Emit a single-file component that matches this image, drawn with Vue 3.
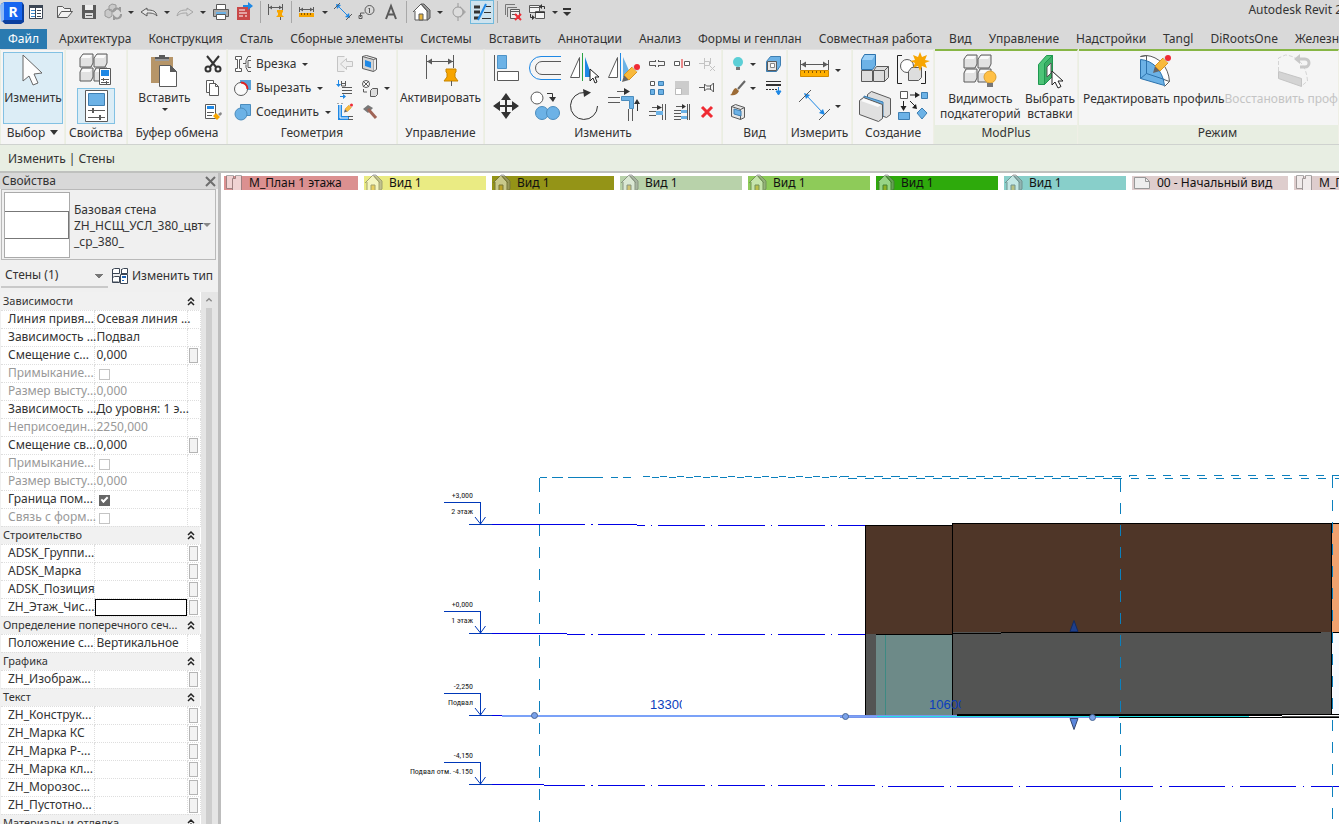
<script setup>
import { h } from 'vue'

const K = '#5a5a5a'
const B = '#6cb2e6'
const D = '#1e88e5'
const G = '#d4d4d4'
const house = `<path d="M4 11l7-7 7 7v9H5v-9" fill="#fff" stroke="${K}"/><path d="M11 4h3l6 6v8l-3 2v-9z" fill="#9a9a9a" stroke="${K}"/><path d="M3 12l8-8 7 8" fill="none" stroke="${K}"/><path d="M9 20v-6h4v6z" fill="#e9b53c" stroke="${K}"/>`
const boxes = `<path d="M2 6l3-4h10v9l-2 4H2zM16 6l3-4h10v9l-2 4H16zM2 20l2-4h11v9l-2 4H2zM16 20l2-4h11v9l-2 4H16z" fill="#e2e2e2" stroke="${K}" stroke-linejoin="round"/><path d="M5 3h9l-2 3H3zM19 3h9l-2 3H17zM5 17h9l-2 3H3zM19 17h9l-2 3H17z" fill="#fafafa"/>`
const cursor = `<path d="M0 0v14l3-3 3 6 3-1.500-3-5.500h5z" fill="#fff" stroke="#222" stroke-linejoin="round"/>`
const pencil = `<path d="M0 17l2-7 5 5z" fill="#666"/><path d="M2 10l8-8 5 5-8 8z" fill="#f8b93c" stroke="#d99420"/><path d="M10 2l2-2 5 5-2 2z" fill="#ddd"/><circle cx="15" cy="2" r="3" fill="#f02a35"/>`

const icons = {
  revit: `<path d="M1 4l3-2h18l2 3v17l-3 2H5l-3-3z" fill="#0b3f9e"/><path d="M4 2h18v18H4z" fill="#1766f0"/><path d="M0 5l4-3v18l-3 2z" fill="#8bb9f7"/>`,
  props: `<path d="M5.500 5.500h13v13h-13z" fill="#fff" stroke="#3c4654"/><path d="M5 5h14v3H5z" fill="#3c4654"/><path d="M7 10.500h4M7 13.500h4M7 16.500h4" stroke="#3b86c9"/><path d="M11.500 8v11M13 10.500h4M13 13.500h4M13 16.500h4" stroke="#3c4654"/>`,
  open: `<path d="M4.500 17.500v-11h5l2 2h6v3M4.500 17.500l4-6h11l-5 6z" fill="#f2f2f2" stroke="${K}" stroke-linejoin="round"/>`,
  save: `<path d="M5 5h14v14H6l-1-1z" fill="${K}"/><path d="M8 5h8v5H8z" fill="#eee"/><path d="M8 13h8v5H8z" fill="#ddd"/><path d="M9 15.500h6" stroke="${K}"/>`,
  sync: `<path d="M4 11l3-2 4 1v6l-3 2-4-2zM8 6l3-2 4 1v5l-3 2-4-2z" fill="#c9c9c9" stroke="#999"/><path d="M12 12a4 4 0 0 1 7-2v-3M20 14a4 4 0 0 1-7 3v3" fill="none" stroke="#9a9a9a" stroke-width="2"/>`,
  undo: `<path d="M4 12l6-4v2c6 0 9 1 10 6-3-3-6-3-10-3v3z" fill="#e5e5e5" stroke="${K}" stroke-linejoin="round"/>`,
  redo: `<path d="M20 12l-6-4v2c-6 0-9 1-10 6 3-3 6-3 10-3v3z" fill="#dadada" stroke="#a5a5a5" stroke-linejoin="round"/>`,
  print: `<path d="M7.500 4.500h9v5h-9z" fill="#fff" stroke="${K}"/><path d="M4.500 9.500h15v7h-15z" fill="#aaa" stroke="${K}"/><path d="M7 12h10v3H7z" fill="${B}"/><path d="M7.500 14.500h9v5h-9z" fill="#fff" stroke="${K}"/>`,
  pdf: `<path d="M4 7h13v13H4z" fill="#c94848"/><path d="M6 10h6M6 13h8M6 16h4M12 16h2" stroke="#fff"/><path d="M10 6h6" stroke="${D}" stroke-width="2"/><path d="M15 2l5 4-5 4z" fill="${D}"/>`,
  dimpin: `<path d="M4.500 4v11M18.500 4v8M5 7.500h13" stroke="${K}"/><path d="M5 7.500l3-2v4zM18 7.500l-3-2v4z" fill="${K}"/><path d="M13 10h6v2l-1 1v2l2 2h-8l2-2v-2l-1-1z" fill="#f7a500"/><path d="M16.500 17v3" stroke="${K}"/>`,
  measure: `<path d="M4.500 7v5M18.500 7v5M5 9.500h13" stroke="${K}"/><path d="M5 9.500l3-2v4zM18 9.500l-3-2v4z" fill="${K}"/><path d="M4 13h15v4H4z" fill="#f7a500"/><path d="M6.500 13v2M9.500 13v2M12.500 13v2M15.500 13v2" stroke="#865500"/>`,
  aligned: `<path d="M7 6l10 10" stroke="${D}"/><path d="M5 4l5 1-4 4zM19 18l-5-1 4-4z" fill="${D}"/><path d="M3 9l6-6M15 20l6-6" stroke="${K}"/>`,
  tag: `<circle cx="14.500" cy="10" r="4.500" fill="none" stroke="${K}"/><path d="M13.500 9l1-1v5M5.500 17v-4h4M4 15.500h3v3H4z" fill="none" stroke="${K}"/>`,
  letter: `<path d="M7 19l5-13 5 13M9 14.500h6" fill="none" stroke="${K}" stroke-width="2"/>`,
  home: house,
  section: `<path d="M14 6l6 6-6 6z" fill="#aaa"/><circle cx="12" cy="12" r="5" fill="#ddd" stroke="#999"/><path d="M12 3v4M12 17v4" stroke="#999"/>`,
  thin: `<path d="M4 7h6M4 12h6M4 18h5" stroke="#333" stroke-width="3"/><path d="M16 6.500h5M14 12.500h7M12 18.500h9" stroke="#333"/><path d="M8 20l8-16" stroke="${D}" stroke-width="2"/>`,
  closewin: `<path d="M4.500 15V4.500H14M6.500 17V7.500H16" fill="none" stroke="#777"/><path d="M9.500 9.500h9v9h-9zM9.500 11.500h9M11 14.500h5" fill="#eee" stroke="${K}"/><path d="M14 14l6 6M20 14l-6 6" stroke="#ed2f38" stroke-width="2"/>`,
  switch: `<path d="M4.500 5.500h10v7h-10zM4.500 7.500h10M10.500 11.500h9v7h-9z" fill="#f4f4f4" stroke="${K}"/><path d="M10 12.500h10M16 6.500h3.500V9M5.500 14v3.500H9" fill="none" stroke="#333"/><path d="M17 4v5l-3-2.500zM7 15v5l3-2.500z" fill="#333"/>`,
  custom: `<path d="M2 8h8v2H2zM2 12h8l-4 4z" fill="#333"/>`,
  arrow: `<path d="M8 3v26l6-5 4 9 5-2-4-9 8-1z" fill="#fdfdfd" stroke="#666" stroke-linejoin="round"/>`,
  typeprops: boxes + `<path d="M21.500 16.500h11v16h-11z" fill="#fff" stroke="${K}"/><path d="M23 18h8v6h-8z" fill="${D}"/><path d="M23 27.500h8M23 30.500h8M25.500 26v3M28.500 29v3" stroke="${K}"/>`,
  properties: `<path d="M7.500 2.500h22v31h-22z" fill="#fff" stroke="${K}"/><path d="M10.500 5.500h16v12h-16z" fill="${B}" stroke="#3e7fb2"/><path d="M10 22.500h17M10 29.500h17" stroke="${K}"/><path d="M14 20h2v5h-2zM21 27h2v5h-2z" fill="${K}"/>`,
  paste: `<path d="M4 5h22v26H4z" fill="#b69568"/><path d="M8 9V5h4V3h6v2h4v4z" fill="${K}"/><path d="M8 8h14" stroke="#ddd"/><path d="M12.500 13.500h11l6 6v15h-17z" fill="#fff" stroke="${K}"/><path d="M23 13v7h7z" fill="${K}"/>`,
  cut: `<path d="M6 4l9 11M18 4L9 15" stroke="#333" stroke-width="2"/><circle cx="7" cy="17" r="2.500" fill="none" stroke="#333" stroke-width="2"/><circle cx="17" cy="17" r="2.500" fill="none" stroke="#333" stroke-width="2"/>`,
  copy: `<path d="M5.500 4.500h7v12h-7z" fill="#fff" stroke="${K}"/><path d="M8.500 7.500h6l3 3v9h-9z" fill="#fff" stroke="${K}"/><path d="M14.500 7.500v3h3" fill="none" stroke="${K}"/>`,
  match: `<path d="M4.500 4.500h10v14h-10z" fill="#fff" stroke="${K}"/><path d="M6 6h7v3H6z" fill="${D}"/><path d="M6 12.500h7M6 15.500h5" stroke="${K}"/><path d="M12 16l3-3 4 4-3 3z" fill="#f7a500"/><path d="M17 14l3-2 1 2-2 2z" fill="#888"/>`,
  cope: `<path d="M4.500 4.500h6v3h-2v9h2v3h-6v-3h2v-9h-2z" fill="#fff" stroke="${K}"/><path d="M20 4.500h-3l-2 4v3h-3M20 19.500h-3l-2-4v-3M20 8.500h-3v7h3" fill="none" stroke="${K}"/>`,
  cutgeo: `<path d="M9 4h11v10h-5l-6-6z" fill="#5aa2d8"/><circle cx="10" cy="13" r="6.500" fill="#fafafa" stroke="${K}"/><path d="M10 6.500a6.500 6.500 0 0 1 6.500 6.500" fill="none" stroke="#d22" stroke-width="2"/>`,
  join: `<path d="M9.500 4.500h10v11h-10z" fill="${B}" stroke="#4b8cbd"/><circle cx="10" cy="14" r="6" fill="${B}" stroke="#4b8cbd"/>`,
  joinoff: `<path d="M11.500 4.500h-7v15h7M19.500 9.500h-6v-3l-6 5.500 6 5.500v-3h6z" fill="#eee" stroke="#c4c4c4"/>`,
  wallopen: `<path d="M4.500 4.500l11 3v12l-11-3z" fill="#d5d5d5" stroke="${K}"/><path d="M15.500 7.500l3-1v11l-3 2M4.500 4.500l4-1 10 3" fill="#eee" stroke="${K}"/><path d="M7 8l6 2v6l-6-2z" fill="${D}"/>`,
  split: `<path d="M8.500 5v5h4V5M8 7.500h5M9 14.500h10M9 17.500h10M9 11.500h10" fill="none" stroke="${K}"/><path d="M5.500 4v5M7 20.500h4" stroke="${D}"/><path d="M3 8h5l-2.500 3zM10 18l3 2.500-3 2.500z" fill="${D}"/>`,
  walljoin: `<path d="M5 5h4v11h7v4H5z" fill="${D}"/><path d="M7 4v14h8" fill="none" stroke="#fff"/><path d="M15 16.500h5M15 19.500h5M5 4v-1M9 4v-1" stroke="${K}"/><g transform="translate(11 4) scale(.5)">${pencil}</g>`,
  paint: `<circle cx="8" cy="8" r="3.500" fill="#fff" stroke="${K}"/><path d="M5 5l6 6M11 5l-6 6M5.500 13v3H9" fill="none" stroke="${K}"/><path d="M12.500 14.500l2-2h5v6l-2 2h-5z" fill="#ddd" stroke="${K}"/>`,
  hammer: `<path d="M5 9l5-4 5 3-5 5z" fill="#777"/><path d="M10 9l8 9" stroke="#a06456" stroke-width="3"/>`,
  activate: `<path d="M3.500 3v24M30.500 3v13M4 9.500h26" stroke="${K}"/><path d="M4 9.500l5-3v6zM30 9.500l-5-3v6z" fill="${K}"/><path d="M23 17h10v3l-1 1v4l3 4H21l3-4v-4l-1-1z" fill="#f7a500" stroke="#c78500"/><path d="M28.500 29v5" stroke="${K}"/>`,
  align: `<path d="M6.500 3v26" stroke="${K}"/><path d="M9.500 3.500h9v13h-9z" fill="${B}" stroke="#4d93c8"/><path d="M9.500 19.500h21v9h-21z" fill="#fff" stroke="${K}"/>`,
  offset: `<path d="M34 4.500H14a11 11 0 0 0 0 23h20" fill="none" stroke="${D}"/><path d="M34 9.500H15a6 6 0 0 0 0 13h19" fill="none" stroke="${K}"/>`,
  mirrorpick: `<path d="M4.500 25.500h9v-20z" fill="#fff" stroke="${K}"/><path d="M19 25V5l5 14v6z" fill="${D}"/><path d="M16.500 1v28" stroke="#27a344"/><g transform="translate(24 17)"><path d="M0 0v12l3-3 2 5 2-1-2-5h4z" fill="#fff" stroke="#222"/></g>`,
  mirrordraw: `<path d="M3.500 25.500h9v-20z" fill="#fff" stroke="${K}"/><path d="M18 25V5l8 18v2z" fill="${B}"/><path d="M15.500 1v28" stroke="${D}"/><g transform="translate(17 13)">${pencil}</g>`,
  move: `<path d="M18 9v18M9 18h18" stroke="#333" stroke-width="2"/><path d="M18 5l5 7H13zM18 31l5-7H13zM5 18l7-5v10zM31 18l-7-5v10z" fill="#333"/>`,
  copyel: `<circle cx="10" cy="10" r="6" fill="#fff" stroke="${K}"/><circle cx="15" cy="25" r="6.500" fill="${B}" stroke="#4b8cbd"/><circle cx="26" cy="25" r="6.500" fill="${B}" stroke="#4b8cbd"/><path d="M20 5.500h5.500V11" fill="none" stroke="#333"/><path d="M22 9h7l-3 5z" fill="#333"/>`,
  rotate: `<path d="M19 4.500A13.500 13.500 0 1 0 31.500 18" fill="none" stroke="#333"/><path d="M17 1l8 3.500-7 4.500z" fill="#333"/>`,
  trim: `<path d="M3 9.500h12M3 14.500h12M23.500 21v12M27.500 21v12M12 3.500h9" stroke="${K}"/><path d="M16.500 8.500h12v12h-4v-8h-8z" fill="${B}" stroke="#4b8cbd"/><path d="M19 0l6 3.500-6 3.500zM29 16l3-5 3 5z" fill="#333"/><path d="M32.500 15v8" stroke="#333"/>`,
  splitel: `<path d="M10.500 9.500h-6v4h6M13.500 9.500h6v4h-6M10.500 8v2M13.500 8v2M10.500 13v2M13.500 13v2" fill="none" stroke="${K}"/>`,
  splitred: `<path d="M9.500 9.500h-5v4h5zM14.500 9.500h5v4h-5z" fill="#fff" stroke="${K}"/><path d="M12 7v9" stroke="#e02020"/>`,
  unpin: `<path d="M4 11.500h5M9.500 6v11M9.500 9.500h5v4h-5M15.500 6v6M15 14l5 5M20 14l-5 5" fill="none" stroke="#c4c4c4"/>`,
  array: `<path d="M5.500 5.500h4v4h-4z" fill="#fff" stroke="${K}"/><path d="M13.500 5.500h5v4h-5zM5.500 13.500h4v5h-4zM13.500 13.500h5v5h-5z" fill="${B}" stroke="#3e7fb2"/>`,
  scale: `<path d="M5 5h14v14H5z" fill="#ccc"/><path d="M5.500 12.500h6v6h-6z" fill="#fff" stroke="#bbb"/>`,
  pin: `<path d="M4 11.500h5M9.500 8v7l2-2h4l3 3v-9l-3 3h-4zM15.500 9v5" fill="none" stroke="${K}"/>`,
  extend: `<path d="M4 11.500h7M4 15.500h7M17.500 4v16M20.500 4v16M7 7.500h7" stroke="${K}"/><path d="M12 5l5 2.500-5 2.500z" fill="#333"/><path d="M11 11h7v4h-7z" fill="${B}"/>`,
  extendm: `<path d="M4 10.500h7M4 13.500h7M4 16.500h7M4 19.500h7M17.500 4v16M19.500 4v16M6 6.500h7" stroke="${K}"/><path d="M12 4l4 2.500-4 2.500z" fill="#333"/><path d="M11 10h6v3h-6zM11 16h6v3h-6z" fill="${B}"/>`,
  del: `<path d="M7 7l10 10M17 7L7 17" stroke="#ef2b33" stroke-width="3"/>`,
  bulb: `<circle cx="12" cy="10" r="5" fill="#5ccfd6"/><path d="M10 15h4v3h-4z" fill="#777"/>`,
  cube: `<path d="M5.500 9.500l4-5h10v9l-4 6h-10z" fill="${B}" stroke="#3e7fb2"/><path d="M6.500 9.500h9v9h-9z" fill="#e8e8e8" stroke="${K}"/><path d="M9.500 11.500h4v4h-4z" fill="#fff" stroke="#888"/>`,
  brush: `<path d="M12 13l7-8" stroke="#666" stroke-width="2"/><path d="M4 19c3-1 2-6 6-7l3 3c-2 4-5 5-9 4z" fill="#9c6b35"/>`,
  linew: `<path d="M5 5.500h15" stroke="#333"/><path d="M5 9h15" stroke="#333" stroke-width="2"/><path d="M5 13.500h11" stroke="#333" stroke-dasharray="2 1"/><path d="M17.500 11v5M15 15l2.500 4 2.500-4z" stroke="${D}" fill="${D}"/>`,
  box3d: `<path d="M5.500 6.500l4-2 9 3v10l-4 2-9-3zM5.500 6.500l9 3v10M14.500 9.500l4-2" fill="#e5e5e5" stroke="${K}"/><path d="M8 9l7 2v5l-7-2z" fill="${B}" stroke="#3e7fb2"/>`,
  ruler: `<path d="M4.500 8v10M32.500 8v10M5 12.500h27" stroke="${K}"/><path d="M5 12.500l5-3v6zM32 12.500l-5-3v6z" fill="${K}"/><path d="M4.500 18.500h28v6h-28z" fill="#ffb000" stroke="#d28b00"/><path d="M8.500 19v2M12.500 19v2M16.500 19v2M20.500 19v2M24.500 19v2M28.500 19v2" stroke="#865500"/>`,
  diag: `<path d="M10 7l17 18" stroke="${D}"/><path d="M8 5l6 2-4 4zM29 27l-6-2 4-4z" fill="${D}"/><path d="M3 14L15 2M23 32l11-11" stroke="${K}"/>`,
  create: `<path d="M4.500 7.500l3-5h11v11l-3 4h-11z" fill="${B}" stroke="#2d73ad"/><path d="M5 8h10l3-5H8z" fill="#9bd0f7"/><path d="M4.500 18.500h11v11h-11zM16.500 18.500l3-4h12v11l-4 4h-11z" fill="#ddd" stroke="${K}"/><path d="M16.500 18.500h11v11M27.500 18.500l4-4" fill="none" stroke="${K}"/>`,
  group: `<path d="M8 3.500H3.500v28H8M27 31.500h4.500V19" fill="none" stroke="#222"/><circle cx="13" cy="14" r="6.500" fill="#fff" stroke="${K}"/><path d="M14.500 19.500l3-4h10v10l-3 3h-10z" fill="#ddd" stroke="${K}"/><path d="M26 0l2 5 5-2-2 5 5 1-5 2 2 5-5-2-2 5-2-5-5 2 2-5-5-2 5-1-2-5 5 2z" fill="#f7a500"/>`,
  assembly: `<path d="M10.500 6.500l4-3 19 7v16l-4 3-19-7z" fill="#ddd" stroke="${K}"/><path d="M7 8l19 6v15l-4 2V17L7 12z" fill="${B}" stroke="#3e7fb2"/><path d="M2.500 12.500l4-3 19 7v14l-4 3-19-7z" fill="#e0e0e0" stroke="${K}"/><path d="M4 13l17 6 3-2L7 10.500z" fill="#fafafa"/>`,
  parts: `<path d="M6.500 3.500h7v7h-7z" fill="#fff" stroke="${K}"/><path d="M27.500 4.500h6v6h-6zM4.500 24.500h11v7h-11z" fill="${B}" stroke="#3e7fb2"/><path d="M28 20l5 5-5 6-5-6z" fill="${B}" stroke="#3e7fb2"/><path d="M16 7h6M9.500 13v6M16 13l5 5" stroke="#222"/><path d="M21 4l5 3-5 3zM6.500 18h6l-3 5zM23 21l-5-1 4-4z" fill="#222"/>`,
  modbulb: boxes + `<circle cx="28" cy="24" r="6" fill="#ffc045" stroke="#dba030"/><path d="M25 30h6v4h-6z" fill="#777"/>`,
  inserts: `<path d="M6.500 11.500l8-9h6v21l-8 8h-6z" fill="#4dc477" stroke="#1f9850"/><path d="M12.500 10.500l8-8v21l-8 8z" fill="#3cae66" stroke="#1f9850"/><path d="M15 14l4-4v10l-4 4z" fill="#fff" stroke="#555"/><g transform="translate(20 18)">${cursor}</g>`,
  edit: `<path d="M4.500 3.500l6-1c12 1 22 11 23 26l-5 5M4.500 3.500l6-1v18l23 8" fill="#fff" stroke="${K}"/><path d="M4.500 6.500c12 1 22 10 24 26l-24-7z" fill="${B}" stroke="#2d73ad"/><path d="M4.500 25.500l6-5V8M10.500 20.500l18 6" fill="none" stroke="#2d73ad"/><g transform="translate(17 3)">${pencil}</g>`,
  restore: `<path d="M4.500 18v-13l7-3c12 1 21 10 22 26l-6 5" fill="none" stroke="${G}" stroke-dasharray="4 2"/><path d="M4.500 18.500l23 7v8l-23-8z" fill="${G}" stroke="#c4c4c4"/><path d="M22 6h9a4 4 0 0 1 0 8h-5" fill="none" stroke="#c8c8c8" stroke-width="3"/><path d="M20 6l6-5v10z" fill="#c8c8c8"/>`,
  edittype: `<path d="M4.500 5.500l2-1h5v5h-7zM13.500 5.500l2-1h4v5h-6zM4.500 13.500l2-1h5v6h-7z" fill="#fff" stroke="#3c4654"/><path d="M4.500 5v13h6M13.500 5v5" fill="none" stroke="#3c4654"/><path d="M12.500 10.500h7v9h-7z" fill="#fff" stroke="#3c4654"/><path d="M14 12h4v2h-4zM14 16h2v1h-2z" fill="#1b62b5"/>`,
  vhouse: `<g opacity=".5">${house}</g>`,
  vplan: `<g opacity=".6"><path d="M4.500 4.500h7v13h-7z" fill="#fff" stroke="#777"/><path d="M10.500 7.500h3v-3h6v15h-9z" fill="#fff" stroke="#777"/></g>`,
  vsheet: `<path d="M4.500 6.500h11l4 4v7h-15z" fill="#eee" stroke="#999"/><path d="M15.500 6.500v4h4" fill="none" stroke="#999"/>`,
  close: `<path d="M8 8l9 9M17 8l-9 9" stroke="#6e6e6e" stroke-width="2"/>`,
  collapse: `<path d="M9 11l3-3 3 3M9 15l3-3 3 3" fill="none" stroke="#222" stroke-width="1.500"/>`,
  up: `<path d="M8 14l4-4 4 4" fill="none" stroke="#888" stroke-width="2"/>`
}

const Icon = (p) =>
  h('svg', {
    class: 'icon',
    width: p.s || 24,
    height: p.s || 24,
    viewBox: `0 0 ${p.s || 24} ${p.s || 24}`,
    'aria-hidden': 'true',
    innerHTML: icons[p.name]
  })
Icon.props = ['name', 's']

const quick = ['open', 'save', 'sync', '>', 'undo', '>', 'redo', '>', 'print', 'pdf', '|', 'dimpin', '|', 'measure', '>', 'aligned', 'tag', 'letter', '|', 'home', '>', 'section', 'thin', '|', 'closewin', 'switch', '>']
const tabs = ['Архитектура', 'Конструкция', 'Сталь', 'Сборные элементы', 'Системы', 'Вставить', 'Аннотации', 'Анализ', 'Формы и генплан', 'Совместная работа', 'Вид', 'Управление', 'Надстройки', 'Tangl', 'DiRootsOne', 'Железно']
const geometry = [['cope', 'Врезка'], ['cutgeo', 'Вырезать'], ['join', 'Соединить']]
const big = ['align', 'offset', 'mirrorpick', 'mirrordraw', 'move', 'copyel', 'rotate', 'trim']
const small = ['splitel', 'splitred', 'unpin', 'array', 'scale', 'pin', 'extend', 'extendm', 'del']

const views = [
  ['rose', 'vplan', 'М_План 1 этажа'], ['yellow', 'vhouse', 'Вид 1'], ['olive', 'vhouse', 'Вид 1'], ['sage', 'vhouse', 'Вид 1'],
  ['lime', 'vhouse', 'Вид 1'], ['green', 'vhouse', 'Вид 1'], ['aqua', 'vhouse', 'Вид 1'], ['sheet', 'vsheet', '00 - Начальный вид'], ['sheet', 'vplan', 'М_План 1 этажа']
]

const rows = [
  { g: 'Зависимости' },
  { n: 'Линия привя...', v: 'Осевая линия ...' },
  { n: 'Зависимость ...', v: 'Подвал' },
  { n: 'Смещение с...', v: '0,000', b: true },
  { n: 'Примыкание...', c: true, off: true },
  { n: 'Размер высту...', v: '0,000', off: true },
  { n: 'Зависимость ...', v: 'До уровня: 1 э...' },
  { n: 'Неприсоедин...', v: '2250,000', off: true },
  { n: 'Смещение св...', v: '0,000', b: true },
  { n: 'Примыкание...', c: true, off: true },
  { n: 'Размер высту...', v: '0,000', off: true },
  { n: 'Граница пом...', c: true, on: true },
  { n: 'Связь с форм...', c: true, off: true },
  { g: 'Строительство' },
  { n: 'ADSK_Группи...', b: true },
  { n: 'ADSK_Марка', b: true },
  { n: 'ADSK_Позиция', b: true },
  { n: 'ZH_Этаж_Чис...', b: true, field: true },
  { g: 'Определение поперечного сеч...' },
  { n: 'Положение с...', v: 'Вертикальное' },
  { g: 'Графика' },
  { n: 'ZH_Изображ...', b: true },
  { g: 'Текст' },
  { n: 'ZH_Конструк...', b: true },
  { n: 'ZH_Марка КС', b: true },
  { n: 'ZH_Марка Р-...', b: true },
  { n: 'ZH_Марка кл...', b: true },
  { n: 'ZH_Морозос...', b: true },
  { n: 'ZH_Пустотно...', b: true },
  { g: 'Материалы и отделка' }
]

const levels = [
  { y: 524, mark: '+3,000', name: '2 этаж' },
  { y: 633, mark: '+0,000', name: '1 этаж' },
  { y: 715, mark: '-2,250', name: 'Подвал' },
  { y: 784, mark: '-4,150', name: 'Подвал отм. -4.150' }
]
</script>

<template>
  <div class="app">
    <header class="title">
      <button class="ib logo" aria-label="Revit"><Icon name="revit" /><b>R</b></button>
      <button class="ib first" aria-label="Свойства"><Icon name="props" /></button>
      <template v-for="(q, i) in quick" :key="i">
        <button v-if="q === '>'" class="caret" aria-label="Список"></button>
        <span v-else-if="q === '|'" class="sep"></span>
        <button v-else class="ib" :class="{ on: q === 'thin' }" :aria-label="q"><Icon :name="q" /></button>
      </template>
      <button class="ib custom" aria-label="Настройка"><Icon name="custom" /></button>
      <span class="name">Autodesk Revit 2</span>
    </header>

    <nav class="tabs">
      <button class="file">Файл</button>
      <button v-for="t in tabs" :key="t">{{ t }}</button>
    </nav>

    <div class="ribbon">
      <section class="panel p-select">
        <div class="body"><button class="large active"><Icon name="arrow" :s="36" /><span>Изменить</span></button></div>
        <h2>Выбор <i class="tri"></i></h2>
      </section>
      <section class="panel p-props">
        <div class="body col">
          <button class="bb" aria-label="Свойства типа"><Icon name="typeprops" :s="36" /></button>
          <button class="bb active" aria-label="Свойства"><Icon name="properties" :s="36" /></button>
        </div>
        <h2>Свойства</h2>
      </section>
      <section class="panel p-clip">
        <div class="body">
          <button class="large grow"><Icon name="paste" :s="36" /><span>Вставить</span><i class="dn"></i></button>
          <div class="col">
            <button class="ib" aria-label="Вырезать"><Icon name="cut" /></button>
            <button class="ib" aria-label="Копировать"><Icon name="copy" /></button>
            <button class="ib" aria-label="Копировать свойства"><Icon name="match" /></button>
          </div>
        </div>
        <h2>Буфер обмена</h2>
      </section>
      <section class="panel p-geo">
        <div class="body">
          <div class="col grow">
            <button v-for="g in geometry" :key="g[0]" class="row"><Icon :name="g[0]" /><span>{{ g[1] }}</span><i class="dn"></i></button>
          </div>
          <div class="col">
            <button class="ib" aria-label="Соединение балок"><Icon name="joinoff" /></button>
            <button class="ib" aria-label="Разделить"><Icon name="split" /></button>
            <button class="ib" aria-label="Соединение стен"><Icon name="walljoin" /></button>
          </div>
          <div class="col">
            <button class="ib" aria-label="Проем"><Icon name="wallopen" /></button>
            <button class="row" aria-label="Краска"><Icon name="paint" /><i class="dn"></i></button>
            <button class="ib" aria-label="Снос"><Icon name="hammer" /></button>
          </div>
        </div>
        <h2>Геометрия</h2>
      </section>
      <section class="panel p-manage">
        <div class="body"><button class="large grow"><Icon name="activate" :s="36" /><span>Активировать</span></button></div>
        <h2>Управление</h2>
      </section>
      <section class="panel p-modify">
        <div class="body">
          <div class="biggrid"><button v-for="b in big" :key="b" class="bb" :aria-label="b"><Icon :name="b" :s="36" /></button></div>
          <div class="smallgrid"><button v-for="b in small" :key="b" class="ib" :aria-label="b"><Icon :name="b" /></button></div>
        </div>
        <h2>Изменить</h2>
      </section>
      <section class="panel p-view">
        <div class="body">
          <div class="col">
            <button class="row" aria-label="Скрыть"><Icon name="bulb" /><i class="dn"></i></button>
            <button class="row" aria-label="Графика"><Icon name="brush" /><i class="dn"></i></button>
            <button class="ib" aria-label="Рамка выбора"><Icon name="box3d" /></button>
          </div>
          <div class="col">
            <button class="ib" aria-label="Переопределить"><Icon name="cube" /></button>
            <button class="ib" aria-label="Линии"><Icon name="linew" /></button>
          </div>
        </div>
        <h2>Вид</h2>
      </section>
      <section class="panel p-measure">
        <div class="body col">
          <button class="row" aria-label="Измерить"><Icon name="ruler" :s="36" /><i class="dn"></i></button>
          <button class="row" aria-label="Размер"><Icon name="diag" :s="36" /><i class="dn"></i></button>
        </div>
        <h2>Измерить</h2>
      </section>
      <section class="panel p-create">
        <div class="body wrap">
          <button v-for="b in ['create', 'group', 'assembly', 'parts']" :key="b" class="bb" :aria-label="b"><Icon :name="b" :s="36" /></button>
        </div>
        <h2>Создание</h2>
      </section>
      <section class="panel ctx p-mod">
        <div class="body">
          <button class="large"><Icon name="modbulb" :s="36" /><span>Видимость<br>подкатегорий</span></button>
          <button class="large"><Icon name="inserts" :s="36" /><span>Выбрать<br>вставки</span></button>
        </div>
        <h2>ModPlus</h2>
      </section>
      <section class="panel ctx p-mode">
        <div class="body">
          <button class="large"><Icon name="edit" :s="36" /><span>Редактировать профиль</span></button>
          <button class="large" disabled><Icon name="restore" :s="36" /><span>Восстановить профиль</span></button>
        </div>
        <h2>Режим</h2>
      </section>
    </div>

    <div class="options">Изменить | Стены</div>

    <main class="work">
      <aside class="side">
        <div class="head"><span>Свойства</span><button class="ib" aria-label="Закрыть"><Icon name="close" /></button></div>
        <button class="type">
          <span class="preview"><span></span></span>
          <span class="tname">Базовая стена<br>ZH_НСЩ_УСЛ_380_цвт<br>_ср_380_</span>
          <i class="dn"></i>
        </button>
        <div class="filter">
          <select aria-label="Категория"><option>Стены (1)</option></select>
          <button class="edit"><Icon name="edittype" /><span>Изменить тип</span></button>
        </div>
        <div class="grid">
          <table>
            <colgroup><col class="c1"><col class="c2"><col class="c3"></colgroup>
            <tbody>
              <tr v-for="(r, i) in rows" :key="i" :class="{ group: r.g, off: r.off }">
                <template v-if="r.g">
                  <th colspan="2" scope="colgroup">{{ r.g }}</th>
                  <th><button class="fold" aria-label="Свернуть"><Icon name="collapse" /></button></th>
                </template>
                <template v-else>
                  <td :id="'n' + i">{{ r.n }}</td>
                  <td>
                    <input v-if="r.c" type="checkbox" :checked="r.on" :disabled="r.off" :aria-labelledby="'n' + i">
                    <input v-else-if="r.field" class="field" type="text" :aria-labelledby="'n' + i">
                    <template v-else>{{ r.v }}</template>
                  </td>
                  <td><button v-if="r.b" class="more" aria-label="Связать параметр"></button></td>
                </template>
              </tr>
            </tbody>
          </table>
          <div class="scroll"><Icon name="up" /><span></span></div>
        </div>
      </aside>

      <div class="area">
        <div class="views">
          <button v-for="(v, i) in views" :key="i" :class="v[0]"><Icon :name="v[1]" /><span>{{ v[2] }}</span></button>
        </div>
        <svg class="canvas" role="img" aria-label="Фасад">
          <defs>
            <clipPath id="d1"><rect x="640" y="695" width="42" height="20" /></clipPath>
            <clipPath id="d2"><rect x="920" y="695" width="41" height="20" /></clipPath>
          </defs>
          <g transform="translate(-221 -190)" fill="none">
            <g shape-rendering="crispEdges">
              <path fill="#4f3628" d="M865 525h87v109h-87zM952 523h379v110H952z" />
              <path fill="#535453" d="M865 634h11v82h-11zM952 632h379v83H952z" />
              <path fill="#6d8a88" d="M876 634h76v82h-76z" />
              <path fill="#f0a26f" d="M1332 523h400v109h-400z" />
              <path fill="#f8fbff" d="M1332 633h400v81h-400z" />
              <path stroke="#3d8a83" d="M885.500 635v80" />
              <path stroke="#000" d="M865.500 716V525.500H952M952.500 716V523.500H1739M1331.500 523v192M876 634.500h76M952 633.500h49M1001 632.500h320M1333 632.500h400M957 714.500h782M957 715.500h325M1119 717.500h620" />
              <path stroke="#535453" d="M1282 716.500h450" />
              <g stroke="#0000e6">
                <path d="M492 524.500h93m6 0h2m5 0h39m0 1h8m6 0h1" />
                <path d="M658 525.500h207" stroke-dasharray="47 6 1 6" />
                <path d="M492 633.500h75m0 1h18m6 0h2m5 0h47m6 0h1" />
                <path d="M658 634.500h207" stroke-dasharray="47 6 1 6" />
                <path d="M492 715.500h20M492 784.500h52m0 1h41m6 0h2m5 0h47m6 0h1" />
                <path d="M658 785.500h217" stroke-dasharray="47 6 1 6" />
                <path d="M882 786.500h1M888 786.500h192" stroke-dasharray="56 6 1 6" />
                <path d="M1080 786.500h73M1160 786.500h2" />
                <path d="M1169 786.500h570" stroke-dasharray="56 7 1 7" />
              </g>
              <g stroke="#0c80bd">
                <path d="M539.500 478v14M1120.500 479v13M1332.500 475v13" />
                <path d="M539.500 503v400M1120.500 503v400M1332.500 500v400" stroke-dasharray="11 11" />
                <path d="M540 477.500h7M552 477.500h11M568 477.500h35M611 477.500h7M623 477.500h8" />
                <path d="M643 476.500h197M652 477.500h188" stroke-dasharray="7 10" />
                <path d="M840 476.500h290M848 478.500h270" stroke-dasharray="9 8" />
                <path d="M1129 475.500h610M1114 478.500h625" stroke-dasharray="8 9" />
              </g>
              <path stroke="#7ba2f8" stroke-width="2" d="M502 716h343" />
              <path stroke="#7895eb" d="M840 715.500h117M840 717.500h279" />
              <path stroke="#7ba2f8" d="M845 716.500h32" />
              <path stroke="#24dfe2" d="M877 716.500h372" />
            </g>
            <g v-for="l in levels" :key="l.y" stroke="#0038b8">
              <path shape-rendering="crispEdges" :d="`M444 ${l.y - 21.5}h37M480.500 ${l.y - 22}v22M469 ${l.y + 0.5}h23`" />
              <path :d="`M475 ${l.y - 7}l5.500 7 5-7`" />
              <text x="473" :y="l.y - 26" class="level">{{ l.mark }}</text>
              <text x="473" :y="l.y - 10" class="level">{{ l.name }}</text>
            </g>
            <g stroke="#4a6795" fill="#7aa2ea">
              <circle cx="534.500" cy="715.500" r="3" /><circle cx="845.500" cy="716.500" r="3" /><circle cx="1092.500" cy="717.500" r="3" />
            </g>
            <path d="M1070 631.500h8l-4-11z" fill="#1e3f8c" stroke="#142b60" />
            <path d="M1070 718.500h8l-4 11z" fill="#5a86dc" stroke="#33456c" />
            <text x="650" y="709" class="dim" clip-path="url(#d1)">13300</text>
            <text x="929" y="709" class="dim" clip-path="url(#d2)">10600</text>
          </g>
        </svg>
      </div>
    </main>
  </div>
</template>

<style>
body { margin: 0; overflow: hidden; }
</style>

<style scoped>
.app { display: flex; flex-direction: column; height: 100vh; overflow: hidden; font: 12px/16px "Noto Sans", "Open Sans", sans-serif; color: #333; background: #d9d9d9; }
button, select, input { font: inherit; color: inherit; background: none; border: 0; padding: 0; margin: 0; }
button { box-sizing: border-box; white-space: nowrap; }
h2 { font: inherit; margin: 0; }
.icon { display: block; flex: none; overflow: visible; }
.grow { flex: 1; }
.col { display: flex; flex-direction: column; align-items: flex-start; }
.row { display: flex; align-items: center; }
.row span { padding-left: 1px; }
.ib { width: 24px; height: 24px; flex: none; }
.bb { width: 36px; height: 36px; flex: none; }
.dn, .caret::before { content: ""; display: block; flex: none; width: 0; border: 3px solid transparent; border-top-color: #333; border-bottom: 0; }

.title { display: flex; align-items: center; height: 24px; flex: none; padding-bottom: 4px; }
.logo { display: grid; }
.logo > * { grid-area: 1 / 1; }
.logo b { place-self: center; color: #fff; font-size: 14px; line-height: 20px; padding-left: 2px; }
.first { margin-right: 5px; }
.title .on { background: #cde3ef; box-shadow: inset 0 0 0 1px #72b9dc; }
.caret { width: 12px; height: 24px; flex: none; display: grid; place-content: center; }
.sep { width: 1px; height: 22px; margin: 0 3px; background: #a8a8a8; flex: none; }
.custom { width: 12px; }
.name { margin: 0 -3px 0 auto; white-space: nowrap; padding-bottom: 4px; }

.tabs { display: flex; height: 20px; flex: none; padding-top: 1px; gap: 1px; overflow: hidden; }
.tabs button { padding: 0 8px; flex: none; line-height: 18px; }
.tabs .file { background: #2a7ab0; color: #fff; margin-right: 3px; }

.ribbon { display: flex; height: 95px; flex: none; background: #e9eee2; gap: 1px; padding-left: 1px; border-bottom: 1px solid #cfd2cf; overflow: hidden; }
.panel { display: flex; flex-direction: column; flex: none; background: #f5f5f5; box-sizing: border-box; border-right: 1px solid #efefe6; border-top: 1px solid #e2e2e2; }
.panel h2 { height: 18px; line-height: 16px; text-align: center; white-space: nowrap; }
.body { display: flex; height: 72px; flex: none; padding: 2px 0 1px; }
.large { display: flex; flex-direction: column; align-items: center; line-height: 15px; }
.large span { padding-top: 2px; }
.large .dn { margin-top: 3px; }
.active { background: #dcedf6; box-shadow: inset 0 0 0 1px #82c1e3; }
.large:disabled { color: #c4c4c4; }
.tri { display: inline-block; border: 4px solid transparent; border-top: 5px solid #333; border-bottom: 0; margin-left: 2px; vertical-align: 2px; }
.p-select { width: 64px; }
.p-select .body { padding-left: 2px; }
.p-select .large { width: 60px; }
.p-props { width: 61px; }
.p-props .body { align-items: center; }
.p-props .active { width: 38px; padding-left: 1px; }
.p-clip { width: 99px; }
.p-clip .body { padding-right: 1px; }
.p-geo { width: 169px; }
.p-geo .body { padding-left: 3px; padding-right: 3px; }
.p-geo .col { width: 25px; }
.p-geo .grow .dn { margin-left: 6px; }
.p-geo .col:last-child { width: 35px; }
.p-geo .col:last-child .dn { margin-left: 2px; }
.p-manage { width: 86px; }
.p-modify { width: 237px; }
.biggrid { display: grid; grid-template-columns: repeat(4, 39px); padding-left: 3px; }
.smallgrid { display: grid; grid-template-columns: repeat(3, 25px); padding-left: 1px; }
.p-view { width: 64px; }
.p-view .body { padding-left: 3px; gap: 5px; }
.p-measure { width: 64px; }
.p-measure .body { padding-left: 8px; }
.p-measure .dn { margin-left: 3px; }
.p-create { width: 81px; }
.wrap { flex-wrap: wrap; column-gap: 1px; padding-left: 4px; }
.ctx { border-top: 2px solid #87b645; }
.ctx .body { height: 71px; }
.ctx h2 { background: #e8eee2; height: 19px; }
.p-mod { width: 143px; }
.p-mod .body { justify-content: space-around; padding-left: 3px; }
.p-mode { flex: 1; overflow: hidden; }
.p-mode .body { padding-left: 4px; }
.p-mode h2 { padding-left: 18px; }
.options { height: 26px; line-height: 28px; flex: none; padding-left: 8px; background: #e8eee3; border-bottom: 2px solid #bfc1be; }

.work { display: flex; flex: 1; min-height: 0; }
.side { width: 218px; flex: none; display: flex; flex-direction: column; background: #f0f0f0; border-right: 3px solid #bdbdbd; }
.head { display: flex; justify-content: space-between; align-items: center; height: 16px; flex: none; background: #d8d8d8; padding-left: 2px; }
.head .ib { margin-right: -4px; }
.type { display: flex; align-items: center; height: 71px; flex: none; margin: 0 2px 0 1px; text-align: left; border: 1px solid #b9b9b9; padding-left: 2px; }
.preview { width: 64px; height: 64px; border: 1px solid #aaa; background: #fff; display: flex; align-items: center; flex: none; }
.preview span { height: 26px; flex: 1; border: 1px solid #777; border-left: 0; }
.tname { padding: 2px 0 0 4px; flex: 1; }
.type .dn { border-width: 4px 4px 0; border-top-color: #888; margin-right: 4px; }
.filter { display: flex; align-items: center; height: 32px; flex: none; padding-bottom: 1px; box-sizing: border-box; }
.filter select { width: 107px; height: 24px; margin-left: 1px; border-bottom: 2px solid #c9c9c9; padding-left: 4px; appearance: none; background: linear-gradient(45deg, transparent 50%, #777 50%) 94px 10px / 4px 4px no-repeat, linear-gradient(-45deg, transparent 50%, #777 50%) 98px 10px / 4px 4px no-repeat; }
.edit { display: flex; align-items: center; }
.grid { display: flex; flex: 1; min-height: 0; overflow: hidden; align-items: stretch; }
table { width: 199px; margin-left: 1px; border-collapse: collapse; table-layout: fixed; align-self: flex-start; background: #fff; flex: none; }
.c1 { width: 93px; } .c2 { width: 93px; } .c3 { width: 13px; }
tr { height: 18px; }
td, th { height: 17px; padding: 0; line-height: 16px; white-space: nowrap; text-align: left; font-weight: normal; border-bottom: 1px dotted #dedede; }
td { border-right: 1px dotted #dedede; }
td:first-child { padding-left: 7px; }
td:nth-child(2) { padding-left: 2px; }
th { background: #f1f1f1; padding-left: 2px; font-size: 11px; }
th:last-child { padding: 0; }
.fold { display: block; width: 16px; height: 16px; margin-left: -4px; }
.fold .icon { margin: -3px 0 0 -4px; }
.off td { color: #999; }
.more { display: block; width: 9px; height: 15px; border: 1px solid #b5b5b5; background: #f3f3f3; margin-left: 1px; }
td input[type="checkbox"] { appearance: none; display: block; box-sizing: border-box; width: 11px; height: 11px; border: 1px solid #c4c4c4; background: #fff; margin: 3px 0 0 2px; }
td input[type="checkbox"]:checked { border-color: #666; background: #666; }
td input[type="checkbox"]:checked::before { content: ""; display: block; width: 5px; height: 2px; border: solid #fff; border-width: 0 0 2px 2px; transform: rotate(-45deg); margin: 1px 0 0 1px; }
.field { display: block; box-sizing: border-box; width: 92px; height: 17px; margin-left: -2px; border: 1px solid #000; background: #fff; }
.scroll { flex: 1; background: #e5e5e5; display: flex; flex-direction: column; align-items: center; overflow: hidden; }
.scroll .icon { height: 16px; }
.scroll span { width: 6px; flex: 1; background: #cdcdcd; }

.area { flex: 1; min-width: 0; display: flex; flex-direction: column; background: #fff; }
.views { display: flex; gap: 6px; height: 17px; flex: none; padding: 3px 0 0 3px; box-sizing: border-box; overflow: hidden; }
.views button { display: flex; align-items: center; width: 122px; height: 14px; flex: none; line-height: 14px; color: #111; }
.views button span { padding-left: 3px; }
.views .icon { margin-left: -2px; }
.views .rose { width: 134px; background: #db9090; }
.views .yellow { background: #eaeb83; } .views .olive { background: #949417; } .views .sage { background: #b8d2aa; }
.views .lime { background: #8ecb59; } .views .green { background: #2eaa0c; } .views .aqua { background: #88cfca; }
.views .sheet { width: 156px; background: #decdcd; }
.canvas { display: block; width: 100%; flex: 1; min-height: 0; }
.level { font: 8px "Roboto Condensed", "Liberation Sans Narrow", Roboto, sans-serif; fill: #222; stroke: none; text-anchor: end; }
.dim { font: 13px "Liberation Sans", sans-serif; fill: #0b3dbc; }
</style>
